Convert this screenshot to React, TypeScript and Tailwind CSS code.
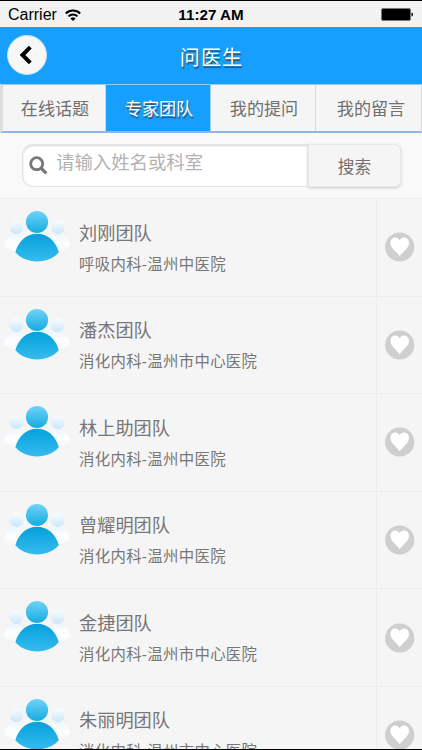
import React from "react";

type Team = {
  name: string;
  dept: string;
};

const TABS = ["在线话题", "专家团队", "我的提问", "我的留言"];

const TEAMS: Team[] = [
  { name: "刘刚团队", dept: "呼吸内科-温州中医院" },
  { name: "潘杰团队", dept: "消化内科-温州市中心医院" },
  { name: "林上助团队", dept: "消化内科-温州中医院" },
  { name: "曾耀明团队", dept: "消化内科-温州中医院" },
  { name: "金捷团队", dept: "消化内科-温州市中心医院" },
  { name: "朱丽明团队", dept: "消化内科-温州市中心医院" },
];

function StatusBar() {
  return (
    <div className="grid h-[27px] shrink-0 grid-cols-3 items-center border-t border-black bg-[#f2f2f2] pt-[1px] pr-[8px] pl-[8px] text-[16px] leading-none text-black">
      <div className="flex items-center gap-[8px]">
        <span>Carrier</span>
        <svg width="16" height="12" viewBox="0 0 16 12" fill="none" stroke="#000" strokeWidth="2">
          <path d="M0.8 4.5a10.3 10.3 0 0 1 14.4 0" />
          <path d="M3.5 7.4a6.4 6.4 0 0 1 9 0" />
          <path d="M8 12 5.4 9.5a3.7 3.7 0 0 1 5.2 0z" fill="#000" stroke="none" />
        </svg>
      </div>
      <span className="pt-[1px] text-center text-[15.2px] font-bold whitespace-nowrap">11:27 AM</span>
      <svg className="justify-self-end" width="33" height="13" viewBox="0 0 33 13">
        <rect x="0.5" y="0.5" width="29" height="12" rx="1.5" fill="#000" stroke="#777" />
        <path d="M30.5 4.5c2 .5 2 3.5 0 4z" fill="#000" />
      </svg>
    </div>
  );
}

function Header() {
  return (
    <header className="grid h-[57px] shrink-0 grid-cols-[1fr_auto_1fr] items-center bg-[#179ffe]">
      <button
        type="button"
        aria-label="返回"
        className="-mt-[2px] ml-[7px] flex h-[40px] w-[40px] items-center justify-center rounded-full border border-[#c4e2f8] bg-[#f7f7f7] pr-[2px]"
      >
        <svg width="14" height="20" viewBox="0 0 14 20" fill="none" stroke="#000" strokeWidth="4">
          <path d="M11.3 2.2 3.5 10l7.8 7.8" />
        </svg>
      </button>
      <h1 className="pt-[5px] pl-[1px] text-[20px] leading-none tracking-[1.2px] text-white [text-shadow:1px_1.5px_1px_#34556d]">
        问医生
      </h1>
      <span />
    </header>
  );
}

function Tabs({ active }: { active: number }) {
  return (
    <nav className="grid h-[49px] shrink-0 grid-cols-[103px_105px_105px_104px] border-t border-b-2 border-t-[#94c8ee] border-b-[#93b4e6] border-r border-r-[#d5d5d5] border-l-3 border-l-[#dddddd] bg-[#f5f5f5]">
      {TABS.map((tab, i) => (
        <button
          key={tab}
          type="button"
          className={`flex items-center justify-center border-r pt-[3px] text-[17.1px] leading-none whitespace-nowrap ${
            i === active
              ? "border-[#a5d3f5] bg-[#179ffe] pl-[2px] text-white [text-shadow:1px_1.5px_1px_#34556d]"
              : "border-[#d9d9d9] pl-[2px] text-[#707070]"
          } ${i === 3 ? "border-r-0 pl-[6px]" : ""}`}
        >
          {tab}
        </button>
      ))}
    </nav>
  );
}

function SearchBar() {
  return (
    <div className="flex h-[65px] shrink-0 items-start bg-[#f9f9f9] pt-[11px] pl-[22px]">
      <div className="flex h-[43px] w-[286px] items-center rounded-l-[11px] border border-r-0 border-[#e4e4e4] bg-white pl-[6px] shadow-[inset_0_1px_2px_#d5d5d5]">
        <svg width="19" height="19" viewBox="0 0 19 19" fill="none" stroke="#777777">
          <circle cx="7.7" cy="7.7" r="6" strokeWidth="2.8" />
          <path d="m12.3 12.3 5 5" strokeWidth="3.2" />
        </svg>
        <input
          type="text"
          placeholder="请输入姓名或科室"
          className="-mt-[6px] ml-[8px] w-[240px] bg-transparent text-[18.4px] text-[#666666] outline-none placeholder:text-[#b2b2b2]"
        />
      </div>
      <button
        type="button"
        className="h-[43px] w-[93px] rounded-r-[6px] border border-[#e9e9e9] bg-[#f5f5f5] pt-[6px] text-[16.7px] leading-none text-[#707070] shadow-[0_1px_3px_#c8c8c8]"
      >
        搜索
      </button>
    </div>
  );
}

function TeamIcon() {
  return (
    <svg width="74" height="52" viewBox="0 0 74 52">
      <defs>
        <linearGradient id="head" x1="0" y1="0" x2="0" y2="1">
          <stop offset="0" stopColor="#6fd3f7" />
          <stop offset="1" stopColor="#16abe0" />
        </linearGradient>
        <linearGradient id="body" x1="0" y1="0" x2="0" y2="1">
          <stop offset="0" stopColor="#04a0db" />
          <stop offset="1" stopColor="#36bcee" />
        </linearGradient>
        <linearGradient id="sideHead" x1="0" y1="0" x2="0" y2="1">
          <stop offset="0" stopColor="#fafdff" />
          <stop offset="1" stopColor="#c9e6f8" />
        </linearGradient>
        <linearGradient id="sideBody" x1="0" y1="0" x2="0" y2="1">
          <stop offset="0" stopColor="#ebf6fd" />
          <stop offset="0.45" stopColor="#fdfeff" />
          <stop offset="1" stopColor="#f7fafc" />
        </linearGradient>
      </defs>
      <path d="M3.8 36.5C5 29 10 24.3 16.5 24.3S28 29 29.2 36.5C22 42.5 11 42.5 3.8 36.5z" fill="url(#sideBody)" />
      <path d="M45 36.5C46.2 29 51.2 24.3 57.7 24.3S69.2 29 70.4 36.5C63.2 42.5 52.2 42.5 45 36.5z" fill="url(#sideBody)" />
      <circle cx="16.5" cy="17" r="7" fill="url(#sideHead)" />
      <circle cx="57.8" cy="17" r="7" fill="url(#sideHead)" />
      {/* central figure, head separated from the shoulders by a thin gap */}
      <path
        d="M15.4 42.3C18.4 30.5 27.4 23.8 37.1 23.8s18.7 6.7 21.7 18.5c-5.2 5.9-12.8 9.1-21.7 9.1s-16.5-3.2-21.7-9.1z"
        fill="url(#body)"
      />
      <circle cx="37" cy="12" r="11.6" fill="#f5f5f5" />
      <circle cx="37" cy="12" r="11.1" fill="url(#head)" />
    </svg>
  );
}

function TeamRow({ team }: { team: Team }) {
  return (
    <li className="flex h-[97.6px] shrink-0 border-t border-[#ececec] bg-[#f5f5f5]">
      <div className="w-[79px] shrink-0 pt-[11px]">
        <TeamIcon />
      </div>
      <div className="flex-1 pt-[24.5px] text-[#777777]">
        <p className="text-[18.2px] leading-[20px] whitespace-nowrap">{team.name}</p>
        <p className="mt-[11px] text-[15.4px] leading-[20px] tracking-[0.32px] whitespace-nowrap">{team.dept}</p>
      </div>
      <div className="flex w-[46px] shrink-0 items-center justify-center border-l border-[#ececec]">
        <svg width="30" height="30" viewBox="0 0 30 30">
          <circle cx="14.7" cy="15" r="14.6" fill="#cfcfcf" />
          <path
            d="M14.7 24.2C11.4 19.6 5.4 16.1 5.4 11c0-3.4 2-5.6 4.7-5.6 2.2 0 3.8 1.1 4.6 2.9.8-1.8 2.4-2.9 4.6-2.9 2.7 0 4.7 2.2 4.7 5.6 0 5.1-6 8.6-9.3 13.2z"
            fill="#ffffff"
          />
        </svg>
      </div>
    </li>
  );
}

export default function App() {
  return (
    <div className="flex h-[750px] w-[422px] flex-col overflow-hidden border-b border-black bg-[#f5f5f5] font-['Liberation_Sans','Noto_Sans_CJK_SC',sans-serif]">
      <StatusBar />
      <Header />
      <Tabs active={1} />
      <SearchBar />
      <ul className="flex min-h-0 flex-1 flex-col overflow-hidden">
        {TEAMS.map((team) => (
          <TeamRow key={team.name} team={team} />
        ))}
      </ul>
    </div>
  );
}
